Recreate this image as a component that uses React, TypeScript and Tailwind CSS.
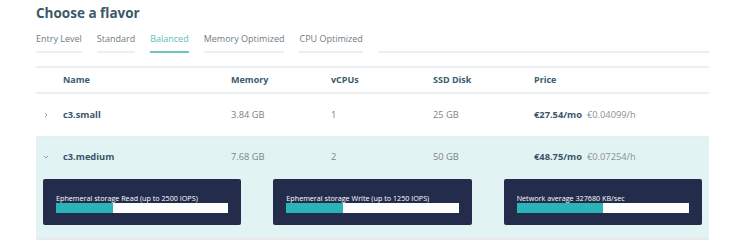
const TABS = ['Entry Level', 'Standard', 'Balanced', 'Memory Optimized', 'CPU Optimized']

type Flavor = {
  name: string
  memory: string
  vcpus: string
  disk: string
  monthly: string
  hourly: string
}

const FLAVORS: Flavor[] = [
  { name: 'c3.small', memory: '3.84 GB', vcpus: '1', disk: '25 GB', monthly: '€27.54/mo', hourly: '€0.04099/h' },
  { name: 'c3.medium', memory: '7.68 GB', vcpus: '2', disk: '50 GB', monthly: '€48.75/mo', hourly: '€0.07254/h' },
]

const METERS = [
  { label: 'Ephemeral storage Read (up to 2500 IOPS)', fill: 33 },
  { label: 'Ephemeral storage Write (up to 1250 IOPS)', fill: 33 },
  { label: 'Network average 327680 KB/sec', fill: 50 },
]

const COLS = 'grid grid-cols-[27px_168px_100px_102px_101px_1fr] items-center'

function Chevron({ open }: { open: boolean }) {
  return (
    <svg width="6" height="6" viewBox="0 0 6 6" className="text-[#8a979e]">
      {open ? (
        <path d="M1 2 L3 4 L5 2" fill="none" stroke="currentColor" strokeWidth="0.9" />
      ) : (
        <path d="M2 1 L4 3 L2 5" fill="none" stroke="currentColor" strokeWidth="0.9" />
      )}
    </svg>
  )
}

function Row({ flavor, open }: { flavor: Flavor; open: boolean }) {
  return (
    <div className={`${COLS} ${open ? 'h-[38px]' : 'h-[42px]'} text-[9.3px]`}>
      <div className="pl-[7px]">
        <Chevron open={open} />
      </div>
      <div className="font-bold text-[#3b5566]">{flavor.name}</div>
      <div className="text-[#7c8387]">{flavor.memory}</div>
      <div className="text-[#7c8387]">{flavor.vcpus}</div>
      <div className="text-[#7c8387]">{flavor.disk}</div>
      <div className="flex items-baseline gap-[5px]">
        <span className="font-bold text-[#3b5566]">{flavor.monthly}</span>
        <span className="text-[#8a9196]">{flavor.hourly}</span>
      </div>
    </div>
  )
}

export default function App() {
  return (
    <div className="h-[251px] w-[750px] overflow-hidden bg-white font-['Open_Sans',sans-serif]">
      <div className="ml-[36px] w-[673px] pt-[4px]">
        <h1 className="text-[13.5px] leading-[18px] font-bold text-[#3a5868]">Choose a flavor</h1>

        {/* Flavor categories */}
        <div className="mt-[10px] flex text-[9px] leading-[13px]">
          {TABS.map((tab) => {
            const active = tab === 'Balanced'
            return (
              <div
                key={tab}
                className={`mr-[15px] border-b-2 pb-[6px] ${
                  active ? 'border-[#6cc7c4] text-[#5dbdbd]' : 'border-[#eceff0] text-[#707c83]'
                }`}
              >
                {tab}
              </div>
            )
          })}
          <div className="flex-1 border-b-2 border-[#eceff0]" />
        </div>

        {/* Flavor table */}
        <div className="mt-[13px] border-t-2 border-[#eceff0]">
          <div className={`${COLS} h-[26px] border-b-2 border-[#eceff0] text-[9px] font-bold text-[#3d5a6b]`}>
            <div />
            <div>Name</div>
            <div>Memory</div>
            <div>vCPUs</div>
            <div>SSD Disk</div>
            <div>Price</div>
          </div>

          <div className="border-b-2 border-[#e3f0f2]">
            <Row flavor={FLAVORS[0]} open={false} />
          </div>

          <div className="border-b-2 border-[#e6eaec] bg-[#e2f3f4] pb-[13px]">
            <Row flavor={FLAVORS[1]} open />
            <div className="mt-[3px] grid grid-cols-3 gap-[32px] px-[7px]">
              {METERS.map((m) => (
                <div key={m.label} className="rounded-[2px] bg-[#232c4b] px-[13px] pt-[14px] pb-[12px]">
                  <div className="text-[7.2px] leading-[10px] text-white">{m.label}</div>
                  <div className="h-[10px] w-full bg-white">
                    <div className="h-full bg-[#2bb4b7]" style={{ width: `${m.fill}%` }} />
                  </div>
                </div>
              ))}
            </div>
          </div>
        </div>
      </div>
    </div>
  )
}
